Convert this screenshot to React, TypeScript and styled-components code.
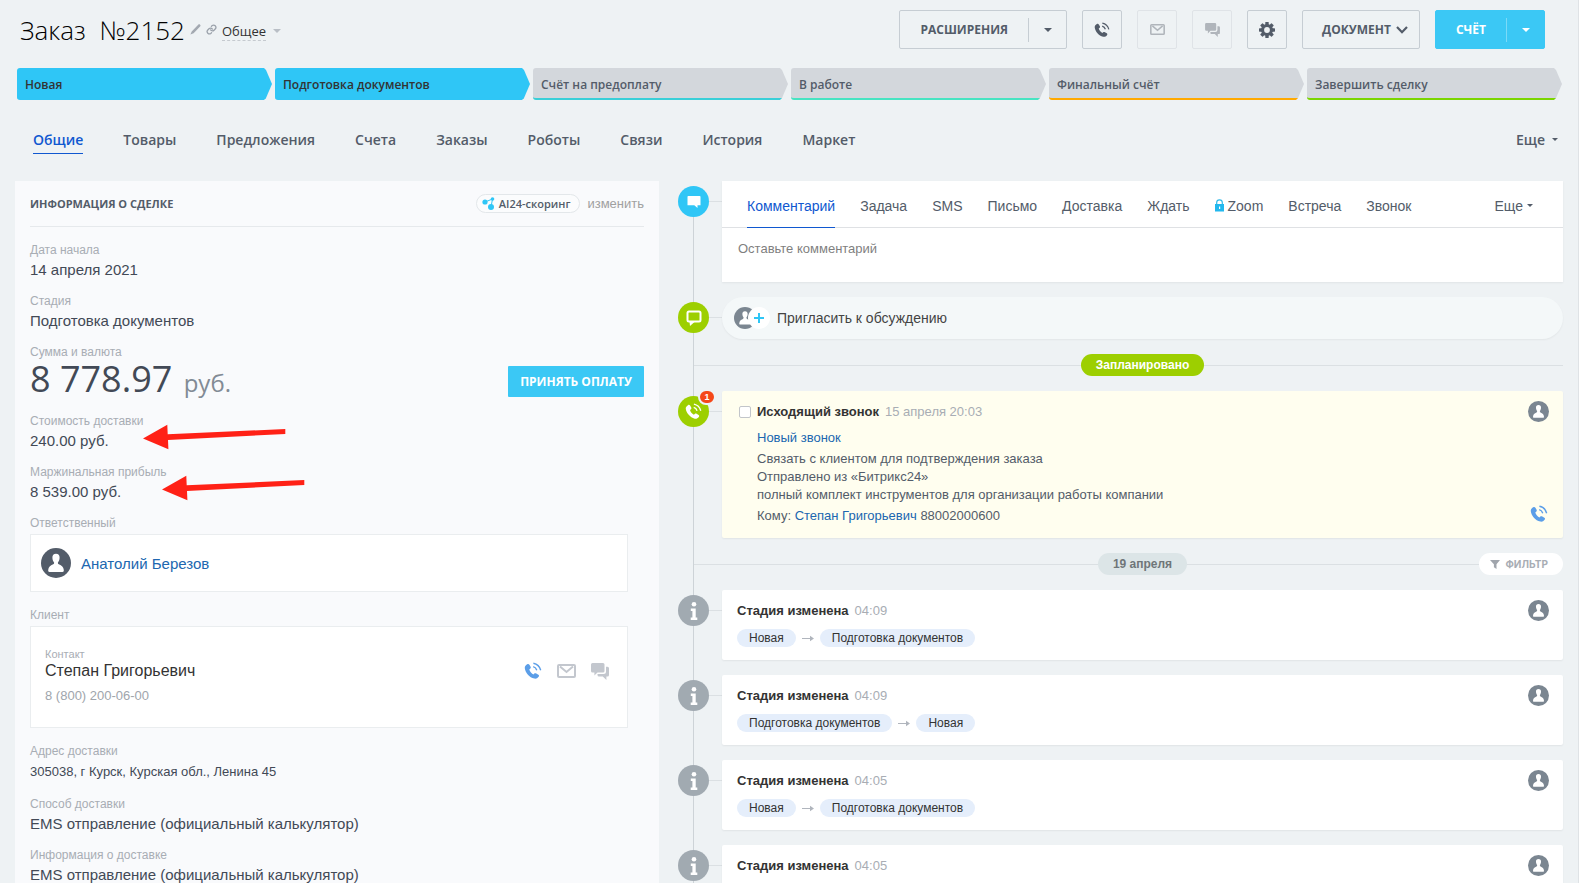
import React from "react";
import styled, { createGlobalStyle, css } from "styled-components";

const Global = createGlobalStyle`
  *, *::before, *::after { box-sizing: border-box; }
  body { margin: 0; background: #eef2f4; font-family: "Liberation Sans", Arial, sans-serif; color: #333; }
  button, textarea, input { font: inherit; color: inherit; margin: 0; }
  button { background: none; border: 0; padding: 0; cursor: pointer; }
  a { color: #2067b0; text-decoration: none; }
  h1, h2, h3, p { margin: 0; }
  svg { display: block; flex: none; }
`;

const openSans = `"Open Sans", "Noto Sans", sans-serif`;

/* ---------- icons ---------- */

const PhoneIcon = ({ size = 18 }: { size?: number }) => (
  <svg width={size} height={size} viewBox="0 0 18 18" fill="none" aria-hidden="true">
    <path
      fill="currentColor"
      d="M3.2 2.300c.8-.6 1.700-.4 2.200.4l1.200 2.100c.4.8.2 1.500-.5 2l-.8.6c.6 2 2 3.900 4.100 5l.9-.8c.6-.5 1.300-.6 2-.2l2.100 1.300c.8.6.8 1.400.2 2.100-1.100 1.400-2.600 2.200-4.300 1.800C5.300 15.300 1.500 10.900.8 6.200.6 4.600 1.600 3.300 3.200 2.300Z"
    />
    <path stroke="currentColor" strokeWidth="1.400" d="M9.200 4.700c1.700.5 3 1.700 3.600 3.500M9.400 1.200c3.500.7 6.300 3.300 7.300 7" />
  </svg>
);

const MailIcon = ({ width = 15 }: { width?: number }) => (
  <svg width={width} height={Math.round(width * 0.72)} viewBox="0 0 19 14" fill="none" stroke="currentColor" aria-hidden="true">
    <rect x="1" y="1" width="17" height="12" rx="1" strokeWidth="2" />
    <path d="m3 2.500 6.500 5.500L16 2.500" strokeWidth="2" />
  </svg>
);

const ChatIcon = ({ width = 15 }: { width?: number }) => (
  <svg width={width} height={width - 1} viewBox="0 0 18 17" fill="currentColor" aria-hidden="true">
    <path d="M1.500 0h10.500a1.500 1.500 0 0 1 1.500 1.500V8A1.500 1.500 0 0 1 12 9.500H6.500L3.400 12.600V9.500H1.500A1.500 1.500 0 0 1 0 8V1.500A1.500 1.500 0 0 1 1.500 0Z" />
    <path d="M15 3.800h1.500A1.500 1.500 0 0 1 18 5.300V12a1.500 1.500 0 0 1-1.500 1.500H15.400V17L11.800 13.500H8A1.500 1.500 0 0 1 6.500 12v-1h6A2.500 2.500 0 0 0 15 8.500Z" />
  </svg>
);

const GearIcon = () => (
  <svg width="16" height="16" viewBox="0 0 16 16" aria-hidden="true">
    <g fill="currentColor">
      {[0, 45, 90, 135].map((a) => (
        <rect key={a} x="6.300" y="0" width="3.400" height="16" rx=".6" transform={`rotate(${a} 8 8)`} />
      ))}
      <circle cx="8" cy="8" r="6" />
    </g>
    <circle cx="8" cy="8" r="2.900" fill="#eef2f4" />
  </svg>
);

const PencilIcon = () => (
  <svg width="11" height="11" viewBox="0 0 11 11" fill="#a3a9b1" aria-hidden="true">
    <path d="M8.200.8c.6-.6 1.300-.6 1.900 0 .6.6.6 1.200 0 1.800L3.600 9.200.4 10.600l1.300-3.200Z" />
  </svg>
);

const LinkIcon = () => (
  <svg width="11" height="11" viewBox="0 0 24 24" fill="none" stroke="#9aa1aa" strokeWidth="2.800" strokeLinecap="round" aria-hidden="true">
    <path d="M10 13a5 5 0 0 0 7.500.5l3-3a5 5 0 0 0-7-7l-1.700 1.700" />
    <path d="M14 11a5 5 0 0 0-7.500-.5l-3 3a5 5 0 0 0 7 7l1.700-1.700" />
  </svg>
);

const Caret = ({ width = 9, height = 5 }: { width?: number; height?: number }) => (
  <svg width={width} height={height} viewBox="0 0 8 4" preserveAspectRatio="none" fill="currentColor" aria-hidden="true">
    <path d="M0 0h8L4 4Z" />
  </svg>
);

const Chevron = () => (
  <svg width="12" height="8" viewBox="0 0 12 8" fill="none" stroke="currentColor" strokeWidth="2.200" aria-hidden="true">
    <path d="m1 1 5 5.200L11 1" />
  </svg>
);

const LockIcon = () => (
  <svg width="9" height="13" viewBox="0 0 9 13" aria-hidden="true">
    <path d="M1.700 6V3.600a2.800 2.800 0 0 1 5.600 0V6" fill="none" stroke="#2fb9e8" strokeWidth="1.200" />
    <rect y="5" width="9" height="7.500" fill="#22b8ee" />
    <path d="M4 7.500h1.200v2.500H4Z" fill="#fff" />
  </svg>
);

const ScoringIcon = () => (
  <svg width="13" height="13" viewBox="0 0 13 13" fill="#2fc6f6" aria-hidden="true">
    <path d="M3 5 10.500 2 9 10" fill="none" stroke="#2fc6f6" strokeWidth="1" />
    <circle cx="3" cy="5" r="2.600" />
    <circle cx="10.500" cy="2" r="1.800" />
    <circle cx="9" cy="10" r="3" />
  </svg>
);

const PersonIcon = ({ size, color }: { size: number; color: string }) => (
  <svg width={size} height={size} viewBox="0 0 30 30" aria-hidden="true">
    <circle cx="15" cy="15" r="15" fill={color} />
    <path
      fill="#fff"
      d="M15 5.800c2.400 0 3.700 1.600 3.600 3.900-.1 1.900-.7 3.600-1.700 4.700 0 .9.200 1.600.9 1.900 3 1.200 4.700 2.600 5 5.700.1 1.300-.2 2-1.300 2H8.500c-1.100 0-1.400-.7-1.300-2 .3-3.100 2-4.500 5-5.700.7-.3.9-1 .9-1.900-1-1.100-1.600-2.800-1.700-4.700-.1-2.300 1.200-3.900 3.600-3.900Z"
    />
  </svg>
);

const InfoIcon = () => (
  <svg width="8" height="18" viewBox="0 0 8 18" fill="#fff" aria-hidden="true">
    <circle cx="4" cy="2.300" r="2.300" />
    <path d="M.8 6.500h4.900v9h1.600V18H.7v-2.500h1.700V9H.8Z" />
  </svg>
);

const CommentIcon = () => (
  <svg width="14" height="12" viewBox="0 0 14 12" fill="#fff" aria-hidden="true">
    <path d="M1.300 0h11.400a.8.800 0 0 1 .8.800v8.400h-3V12L7.300 9.200H.5V.8A.8.800 0 0 1 1.300 0Z" />
  </svg>
);

const BubbleIcon = () => (
  <svg width="16" height="16" viewBox="0 0 16 16" fill="none" aria-hidden="true">
    <rect x="1.500" y="1.500" width="13" height="10" rx="1.500" stroke="#fff" strokeWidth="2" />
    <path d="M3.500 12h5L4 16Z" fill="#fff" />
  </svg>
);

const FunnelIcon = () => (
  <svg width="10" height="9" viewBox="0 0 10 9" fill="#a0a5ac" aria-hidden="true">
    <path d="M0 0h10L6.500 4.300V9L3.900 7.200V4.300Z" />
  </svg>
);

const ArrowIcon = () => (
  <svg width="12" height="7" viewBox="0 0 12 7" fill="#b0b5bd" aria-hidden="true">
    <path d="M0 3h8V.8L12 3.500 8 6.200V4H0Z" />
  </svg>
);

/* ---------- page frame ---------- */

const Page = styled.div`
  height: 100vh;
  display: flex;
  flex-direction: column;
  overflow: hidden;
  border-right: 1px solid #dfe3e6;
`;

const Header = styled.header`
  display: flex;
  align-items: flex-start;
  justify-content: space-between;
  padding: 10px 33px 0 20px;
`;

const TitleGroup = styled.div`
  display: flex;
  align-items: center;
  gap: 5px;
  height: 39px;
`;

const Title = styled.h1`
  font: 300 26px/40px ${openSans};
  color: #000;
  white-space: pre;
`;

const CategoryButton = styled.button`
  display: flex;
  align-items: center;
  gap: 7px;
  font: 400 13px/18px ${openSans};
  color: #333;
  padding-top: 3px;
  span { border-bottom: 1px dashed #c5cacf; }
  svg { color: #b9bfc6; }
`;

const Toolbar = styled.div`
  display: flex;
  gap: 15px;
`;

const frame = css`
  height: 39px;
  border: 1px solid #c6cdd3;
  border-radius: 2px;
  color: #535c69;
  font: 700 12px/37px ${openSans};
`;

const IconButton = styled.button`
  ${frame}
  width: 40px;
  display: flex;
  align-items: center;
  justify-content: center;
  &:disabled { color: #b0b5bb; border-color: #dfe3e7; cursor: default; }
`;

const TextButton = styled.button`
  ${frame}
  display: flex;
  align-items: center;
  gap: 5px;
  padding: 0 11px 0 19px;
`;

const SplitButton = styled.div<{ $primary?: boolean }>`
  ${frame}
  display: flex;
  align-items: center;
  ${(p) => p.$primary && css`background: #3bc8f5; border-color: #3bc8f5; color: #fff;`}
  button { height: 37px; display: flex; align-items: center; justify-content: center; }
  button:first-child { padding: 0 20px; }
  button:last-child { width: 37px; }
`;

const SplitLine = styled.span<{ $primary?: boolean }>`
  width: 1px;
  height: 24px;
  background: ${(p) => (p.$primary ? "#7bdaf8" : "#c6cdd3")};
`;

/* ---------- stages ---------- */

const Stages = styled.div`
  display: grid;
  grid-template-columns: repeat(6, 1fr);
  gap: 3px;
  padding: 0 16px 0 17px;
  margin-top: 19px;
`;

const Stage = styled.button<{ $line: string; $done?: boolean }>`
  height: 32px;
  padding: 3px 8px 0;
  text-align: left;
  font: 600 12px/28px ${openSans};
  color: ${(p) => (p.$done ? "#333" : "#535c69")};
  background: ${(p) => (p.$done ? "#2fc6f6" : "#d3d7dc")};
  border-bottom: 2px solid ${(p) => p.$line};
  border-radius: 3px 0 0 3px;
  clip-path: polygon(0 0, calc(100% - 8px) 0, calc(100% - 6px) 2px, 100% 50%, calc(100% - 6px) calc(100% - 2px), calc(100% - 8px) 100%, 0 100%);
`;

/* ---------- main tabs ---------- */

const Tabs = styled.nav`
  display: flex;
  gap: 40px;
  padding: 0 20px 0 33px;
  margin-top: 28px;
  height: 26px;
`;

const Tab = styled.a<{ $active?: boolean }>`
  display: flex;
  align-items: center;
  gap: 7px;
  height: 26px;
  padding-bottom: 2px;
  font: 600 14px/22px ${openSans};
  color: ${(p) => (p.$active ? "#1058d0" : "#535c69")};
  border-bottom: 1px solid ${(p) => (p.$active ? "#1058d0" : "transparent")};
  &:last-child { margin-left: auto; }
`;

const Columns = styled.main`
  flex: 1;
  min-height: 0;
  display: grid;
  grid-template-columns: 644fr 885fr;
  gap: 19px;
  margin-top: 27px;
  padding: 0 15px;
`;

/* ---------- deal card ---------- */

const Panel = styled.section`
  background: #f9fafc;
  padding: 0 15px;
`;

const PanelHeader = styled.div`
  display: flex;
  align-items: center;
  height: 46px;
  border-bottom: 1px solid #e6e9ec;
  margin-bottom: 13px;
`;

const PanelTitle = styled.h2`
  flex: 1;
  font: 700 11px/20px ${openSans};
  color: #535c69;
`;

const ScoringButton = styled.button`
  display: flex;
  align-items: center;
  gap: 4px;
  height: 19px;
  padding: 0 9px 0 5px;
  border: 1px solid #e3e7ea;
  border-radius: 10px;
  background: #fbfcfd;
  font: 600 11px/17px ${openSans};
  color: #535c69;
`;

const EditLink = styled.a`
  margin-left: 7px;
  font-size: 13px;
  color: #a0a0a0;
`;

const Field = styled.div`
  display: flex;
  flex-direction: column;
  margin-bottom: 11px;
`;

const FieldLabel = styled.div`
  font-size: 12px;
  line-height: 20px;
  color: #a8adb4;
`;

const FieldValue = styled.div<{ $small?: boolean }>`
  position: relative;
  font-size: ${(p) => (p.$small ? 13 : 15)}px;
  line-height: ${(p) => (p.$small ? 22 : 20)}px;
  color: #424956;
`;

const Pointer = styled.svg<{ $left: number }>`
  position: absolute;
  left: ${(p) => p.$left}px;
  top: -7px;
`;

const SumRow = styled.div`
  display: flex;
  align-items: center;
  justify-content: space-between;
  height: 38px;
`;

const Sum = styled.div`
  font: 400 36px/38px ${openSans};
  color: #424956;
  small { margin-left: 2px; font-size: 24px; color: #828b95; }
`;

const PayButton = styled.button`
  height: 31px;
  padding: 0 12px;
  border-radius: 1px;
  background: #3bc8f5;
  color: #fff;
  font: 700 12px/31px ${openSans};
`;

const Box = styled.div<{ $tall?: boolean }>`
  display: flex;
  align-items: center;
  height: ${(p) => (p.$tall ? 102 : 58)}px;
  margin: 1px 16px 2px 0;
  padding: 0 ${(p) => (p.$tall ? 18 : 10)}px;
  padding-left: ${(p) => (p.$tall ? 14 : 10)}px;
  border: 1px solid #eaedef;
  background: #fff;
`;

const UserLink = styled.a`
  margin-left: 10px;
  font-size: 15px;
`;

const Contact = styled.div`
  flex: 1;
  padding-bottom: 2px;
`;

const ContactKind = styled.div`
  font-size: 11px;
  line-height: 14px;
  color: #a8adb4;
`;

const ContactName = styled.div`
  font-size: 16px;
  line-height: 20px;
`;

const ContactPhone = styled.div`
  margin-top: 5px;
  font-size: 13px;
  line-height: 20px;
  color: #a0a5ac;
`;

const ContactActions = styled.div`
  display: flex;
  align-items: center;
  gap: 15px;
  padding-bottom: 12px;
  color: #c3c7ce;
  button:first-child { color: #5b9ee8; }
`;

/* ---------- timeline ---------- */

const Timeline = styled.section`
  display: flex;
  flex-direction: column;
  background: linear-gradient(#cdd3d7, #cdd3d7) 15px 20px / 1px 100% no-repeat;
`;

const Entry = styled.div`
  display: grid;
  grid-template-columns: 44px 1fr;
  margin-bottom: 15px;
  flex: none;
`;

const MarkerCell = styled.div`
  display: flex;
  align-items: center;
  height: 31px;
  margin-top: 5px;
  &::after { content: ""; flex: 1; height: 1px; background: #dbe0e3; }
`;

const Marker = styled.div<{ $color: string }>`
  position: relative;
  display: flex;
  align-items: center;
  justify-content: center;
  width: 31px;
  height: 31px;
  border-radius: 50%;
  background: ${(p) => p.$color};
  color: #fff;
`;

const Badge = styled.span`
  position: absolute;
  top: -7px;
  right: -7px;
  width: 18px;
  height: 16px;
  border: 2px solid #eef2f4;
  border-radius: 8px;
  background: #f54819;
  font: 700 9px/12px "Liberation Sans", sans-serif;
  text-align: center;
`;

const Card = styled.article<{ $planned?: boolean }>`
  display: flex;
  justify-content: space-between;
  min-height: 70px;
  padding: 10px 14px 10px 15px;
  border-radius: 2px;
  background: ${(p) => (p.$planned ? "#fffeef" : "#fff")};
  box-shadow: 0 1px 2px rgba(0, 0, 0, 0.06);
`;

const Composer = styled.div`
  background: #fff;
  box-shadow: 0 1px 2px rgba(0, 0, 0, 0.06);
`;

const ComposerTabs = styled.div`
  display: flex;
  gap: 25px;
  height: 47px;
  padding: 0 30px 0 25px;
  border-bottom: 1px solid #dfe1e4;
`;

const ComposerTab = styled.button<{ $active?: boolean }>`
  display: flex;
  align-items: center;
  gap: 4px;
  height: 47px;
  padding-top: 3px;
  font-size: 14px;
  color: ${(p) => (p.$active ? "#1058d0" : "#535c69")};
  border-bottom: 1px solid ${(p) => (p.$active ? "#1058d0" : "transparent")};
  &:last-child { margin-left: auto; }
`;

const CommentBox = styled.textarea`
  display: block;
  width: 100%;
  height: 54px;
  padding: 12px 16px;
  border: 0;
  outline: 0;
  resize: none;
  background: transparent;
  font-size: 13px;
  line-height: 18px;
  &::placeholder { color: #7f7f7f; opacity: 1; }
`;

const InviteButton = styled.button`
  display: flex;
  align-items: center;
  height: 42px;
  padding: 0 12px;
  border-radius: 21px;
  background: #f4f8f9;
  box-shadow: 0 1px 2px rgba(0, 0, 0, 0.05);
  font-size: 14px;
  color: #444;
`;

const PlusCircle = styled.span`
  display: flex;
  align-items: center;
  justify-content: center;
  width: 22px;
  height: 22px;
  margin: 0 7px 0 -8px;
  border-radius: 50%;
  background: #fff;
`;

const Separator = styled.div`
  display: grid;
  grid-template-columns: 28px 1fr auto 1fr;
  align-items: center;
  height: 22px;
  margin: 0 0 15px 16px;
  flex: none;
`;

const Rule = styled.span`
  display: flex;
  align-items: center;
  &::before { content: ""; flex: 1; height: 1px; background: #dbe0e3; }
`;

const Pill = styled.span<{ $green?: boolean }>`
  height: 22px;
  padding: 0 15px;
  border-radius: 11px;
  background: ${(p) => (p.$green ? "#9dcf00" : "#dce5e7")};
  color: ${(p) => (p.$green ? "#fff" : "#6f7679")};
  font-size: 12px;
  font-weight: 700;
  line-height: 23px;
`;

const FilterButton = styled.button`
  display: flex;
  align-items: center;
  gap: 6px;
  height: 22px;
  padding: 0 15px 0 11px;
  border-radius: 11px;
  background: #fff;
  color: #a8adb4;
  font: 700 10px/22px Inter, "Liberation Sans", sans-serif;
`;

const CardTitle = styled.h3`
  display: flex;
  align-items: center;
  gap: 6px;
  font-size: 13px;
  line-height: 22px;
  color: #333;
  time { font-weight: 400; color: #a8adb4; }
`;

const Check = styled.input`
  appearance: none;
  width: 12px;
  height: 12px;
  border: 1px solid #c2c5ca;
  border-radius: 2px;
  background: #fff;
`;

const CallHeading = styled(CardTitle)`
  padding-left: 2px;
`;

const CallBody = styled.div`
  padding: 6px 0 3px 20px;
  font-size: 13px;
  line-height: 18px;
  color: #535c69;
  p { margin-bottom: 3px; }
`;

const CardSide = styled.div`
  display: flex;
  flex-direction: column;
  align-items: center;
  justify-content: space-between;
  padding-bottom: 5px;
  button { color: #5b9ee8; }
`;

const Change = styled.div`
  display: flex;
  align-items: center;
  gap: 6px;
  margin-top: 7px;
`;

const Chip = styled.span`
  height: 18px;
  padding: 0 12px;
  border-radius: 9px;
  background: #e5eefb;
  color: #333;
  font-size: 12px;
  line-height: 19px;
`;

/* ---------- data ---------- */

const NEW = "Новая";
const DOCS = "Подготовка документов";

const stages = [
  { name: NEW, line: "#2fc6f6", done: true },
  { name: DOCS, line: "#2fc6f6", done: true },
  { name: "Счёт на предоплату", line: "#39cfd8" },
  { name: "В работе", line: "#47e4c2" },
  { name: "Финальный счёт", line: "#ffa900" },
  { name: "Завершить сделку", line: "#7bd500" },
];

const tabs = ["Общие", "Товары", "Предложения", "Счета", "Заказы", "Роботы", "Связи", "История", "Маркет"];
const composerTabs = ["Комментарий", "Задача", "SMS", "Письмо", "Доставка", "Ждать", "Zoom", "Встреча", "Звонок"];

const history = [
  { time: "04:09", from: NEW, to: DOCS },
  { time: "04:09", from: DOCS, to: NEW },
  { time: "04:05", from: NEW, to: DOCS },
  { time: "04:05", from: DOCS, to: NEW },
];

type FieldProps = { label: string; value: string; small?: boolean; pointer?: number };

const TextField = ({ label, value, small, pointer }: FieldProps) => (
  <Field>
    <FieldLabel>{label}</FieldLabel>
    <FieldValue $small={small}>
      {value}
      {pointer !== undefined && (
        <Pointer $left={pointer} width="143" height="26" viewBox="0 0 143 26" fill="#ff2116" aria-hidden="true">
          <path d="M0 14.500 24.300.8 24.700 10.300 142.300 5V10L25 16l.4 9.300Z" />
        </Pointer>
      )}
    </FieldValue>
  </Field>
);

export default function App() {
  return (
    <Page>
      <Global />
      <Header>
        <TitleGroup>
          <Title>{"Заказ  №2152"}</Title>
          <button aria-label="Переименовать"><PencilIcon /></button>
          <button aria-label="Ссылка"><LinkIcon /></button>
          <CategoryButton><span>Общее</span><Caret width={8} height={4} /></CategoryButton>
        </TitleGroup>
        <Toolbar>
          <SplitButton>
            <button>РАСШИРЕНИЯ</button>
            <SplitLine />
            <button aria-label="Список расширений"><Caret width={8} height={4} /></button>
          </SplitButton>
          <IconButton aria-label="Позвонить"><PhoneIcon size={16} /></IconButton>
          <IconButton aria-label="Написать письмо" disabled><MailIcon /></IconButton>
          <IconButton aria-label="Открыть чат" disabled><ChatIcon /></IconButton>
          <IconButton aria-label="Настройки"><GearIcon /></IconButton>
          <TextButton>ДОКУМЕНТ<Chevron /></TextButton>
          <SplitButton $primary>
            <button>СЧЁТ</button>
            <SplitLine $primary />
            <button aria-label="Варианты счёта"><Caret width={8} height={4} /></button>
          </SplitButton>
        </Toolbar>
      </Header>

      <Stages>
        {stages.map((s) => (
          <Stage key={s.name} $line={s.line} $done={s.done}>{s.name}</Stage>
        ))}
      </Stages>

      <Tabs>
        {tabs.map((t, i) => (
          <Tab key={t} href="#" $active={i === 0}>{t}</Tab>
        ))}
        <Tab href="#">Еще<Caret width={6} height={3} /></Tab>
      </Tabs>

      <Columns>
        <Panel>
          <PanelHeader>
            <PanelTitle>ИНФОРМАЦИЯ О СДЕЛКЕ</PanelTitle>
            <ScoringButton><ScoringIcon />AI24-скоринг</ScoringButton>
            <EditLink href="#">изменить</EditLink>
          </PanelHeader>
          <TextField label="Дата начала" value="14 апреля 2021" />
          <TextField label="Стадия" value={DOCS} />
          <Field>
            <FieldLabel>Сумма и валюта</FieldLabel>
            <SumRow>
              <Sum>8 778.97 <small>руб.</small></Sum>
              <PayButton>ПРИНЯТЬ ОПЛАТУ</PayButton>
            </SumRow>
          </Field>
          <TextField label="Стоимость доставки" value="240.00 руб." pointer={113} />
          <TextField label="Маржинальная прибыль" value="8 539.00 руб." pointer={132} />
          <Field>
            <FieldLabel>Ответственный</FieldLabel>
            <Box>
              <PersonIcon size={30} color="#535c69" />
              <UserLink href="#">Анатолий Березов</UserLink>
            </Box>
          </Field>
          <Field>
            <FieldLabel>Клиент</FieldLabel>
            <Box $tall>
              <Contact>
                <ContactKind>Контакт</ContactKind>
                <ContactName>Степан Григорьевич</ContactName>
                <ContactPhone>8 (800) 200-06-00</ContactPhone>
              </Contact>
              <ContactActions>
                <button aria-label="Позвонить"><PhoneIcon /></button>
                <button aria-label="Написать письмо"><MailIcon width={19} /></button>
                <button aria-label="Открыть чат"><ChatIcon width={18} /></button>
              </ContactActions>
            </Box>
          </Field>
          <TextField label="Адрес доставки" value="305038, г Курск, Курская обл., Ленина 45" small />
          <TextField label="Способ доставки" value="EMS отправление (официальный калькулятор)" />
          <TextField label="Информация о доставке" value="EMS отправление (официальный калькулятор)" />
        </Panel>

        <Timeline>
          <Entry>
            <MarkerCell><Marker $color="#2fc6f6"><CommentIcon /></Marker></MarkerCell>
            <Composer>
              <ComposerTabs>
                {composerTabs.map((t, i) => (
                  <ComposerTab key={t} $active={i === 0}>{t === "Zoom" && <LockIcon />}{t}</ComposerTab>
                ))}
                <ComposerTab>Еще<Caret width={6} height={3} /></ComposerTab>
              </ComposerTabs>
              <CommentBox aria-label="Комментарий" placeholder="Оставьте комментарий" />
            </Composer>
          </Entry>

          <Entry>
            <MarkerCell><Marker $color="#9dcf00"><BubbleIcon /></Marker></MarkerCell>
            <InviteButton>
              <PersonIcon size={22} color="#7b8691" />
              <PlusCircle>
                <svg width="10" height="10" viewBox="0 0 10 10" stroke="#2fc6f6" strokeWidth="2" aria-hidden="true">
                  <path d="M5 0v10M0 5h10" />
                </svg>
              </PlusCircle>
              Пригласить к обсуждению
            </InviteButton>
          </Entry>

          <Separator>
            <Rule />
            <Rule />
            <Pill $green>Запланировано</Pill>
            <Rule />
          </Separator>

          <Entry>
            <MarkerCell>
              <Marker $color="#9dcf00"><PhoneIcon size={17} /><Badge>1</Badge></Marker>
            </MarkerCell>
            <Card $planned>
              <div>
                <CallHeading>
                  <Check type="checkbox" id="call-done" />
                  <label htmlFor="call-done">Исходящий звонок</label>
                  <time>15 апреля 20:03</time>
                </CallHeading>
                <CallBody>
                  <p><a href="#">Новый звонок</a></p>
                  <p>
                    Связать с клиентом для подтверждения заказа<br />
                    Отправлено из «Битрикс24»<br />
                    полный комплект инструментов для организации работы компании
                  </p>
                  Кому: <a href="#">Степан Григорьевич</a> 88002000600
                </CallBody>
              </div>
              <CardSide>
                <PersonIcon size={21} color="#7b8691" />
                <button aria-label="Позвонить"><PhoneIcon /></button>
              </CardSide>
            </Card>
          </Entry>

          <Separator>
            <Rule />
            <Rule />
            <Pill>19 апреля</Pill>
            <Rule>
              <FilterButton><FunnelIcon />ФИЛЬТР</FilterButton>
            </Rule>
          </Separator>

          {history.map((h, i) => (
            <Entry key={i}>
              <MarkerCell><Marker $color="#a1aab1"><InfoIcon /></Marker></MarkerCell>
              <Card>
                <div>
                  <CardTitle>Стадия изменена <time>{h.time}</time></CardTitle>
                  <Change><Chip>{h.from}</Chip><ArrowIcon /><Chip>{h.to}</Chip></Change>
                </div>
                <CardSide><PersonIcon size={21} color="#7b8691" /></CardSide>
              </Card>
            </Entry>
          ))}
        </Timeline>
      </Columns>
    </Page>
  );
}
